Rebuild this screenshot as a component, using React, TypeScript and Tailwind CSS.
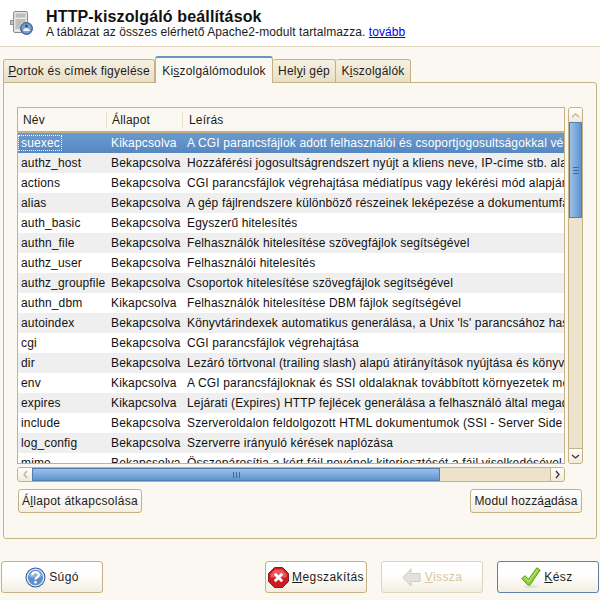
import React from 'react';

const rows = [
  ['suexec', 'Kikapcsolva', 'A CGI parancsfájlok adott felhasználói és csoportjogosultságokkal végrehajtása'],
  ['authz_host', 'Bekapcsolva', 'Hozzáférési jogosultságrendszert nyújt a kliens neve, IP-címe stb. alapján'],
  ['actions', 'Bekapcsolva', 'CGI parancsfájlok végrehajtása médiatípus vagy lekérési mód alapján'],
  ['alias', 'Bekapcsolva', 'A gép fájlrendszere különböző részeinek leképezése a dokumentumfába'],
  ['auth_basic', 'Bekapcsolva', 'Egyszerű hitelesítés'],
  ['authn_file', 'Bekapcsolva', 'Felhasználók hitelesítése szövegfájlok segítségével'],
  ['authz_user', 'Bekapcsolva', 'Felhasználói hitelesítés'],
  ['authz_groupfile', 'Bekapcsolva', 'Csoportok hitelesítése szövegfájlok segítségével'],
  ['authn_dbm', 'Kikapcsolva', 'Felhasználók hitelesítése DBM fájlok segítségével'],
  ['autoindex', 'Bekapcsolva', "Könyvtárindexek automatikus generálása, a Unix 'ls' parancsához hasonlóan"],
  ['cgi', 'Bekapcsolva', 'CGI parancsfájlok végrehajtása'],
  ['dir', 'Bekapcsolva', 'Lezáró törtvonal (trailing slash) alapú átirányítások nyújtása és könyvtárak'],
  ['env', 'Kikapcsolva', 'A CGI parancsfájloknak és SSI oldalaknak továbbított környezetek módosítása'],
  ['expires', 'Kikapcsolva', 'Lejárati (Expires) HTTP fejlécek generálása a felhasználó által megadott'],
  ['include', 'Bekapcsolva', 'Szerveroldalon feldolgozott HTML dokumentumok (SSI - Server Side Includes)'],
  ['log_config', 'Bekapcsolva', 'Szerverre irányuló kérések naplózása'],
  ['mime', 'Bekapcsolva', 'Összepárosítja a kért fájl nevének kiterjesztését a fájl viselkedésével'],
];

function ServerIcon() {
  return (
    <svg width="24" height="24" viewBox="0 0 24 24">
      <rect x="3.500" y="0.500" width="14" height="21" rx="1.500" fill="#e6e6e2" stroke="#8c8c8c" />
      <rect x="5.500" y="2.500" width="10" height="4" fill="#bdbdb8" />
      <path d="M5.500 9h10M5.500 11h10M5.500 13h6M5.500 15h5M5.500 17h5" stroke="#9a9a96" />
      <rect x="0.500" y="9.500" width="3" height="4" fill="#c4c4c0" stroke="#909090" />
      <circle cx="16.500" cy="17.500" r="6" fill="#5f86bb" stroke="#3f5f8f" />
      <circle cx="16.500" cy="17.500" r="4.500" fill="#7fa3d0" />
      <path d="M13 20c1-4 6-4 7 0z" fill="#eef2f8" />
      <circle cx="16.500" cy="15" r="1.500" fill="#2f4f80" />
    </svg>
  );
}

function HelpIcon() {
  return (
    <svg width="21" height="21" viewBox="0 0 21 21">
      <circle cx="10.500" cy="10.500" r="10" fill="#2f5f9f" />
      <circle cx="10.500" cy="10.500" r="8.300" fill="#5f8ec8" stroke="#e4edf7" strokeWidth="1.300" />
      <path d="M3.500 9a7.500 7 0 0 1 14 0c-4 2-10 2-14 0z" fill="#8fb3dc" />
      <path d="M7.300 8.200c0-4 6.500-4 6.500-.2 0 2.400-3.300 2.400-3.300 4.600" fill="none" stroke="#fff" strokeWidth="2.200" />
      <rect x="9.300" y="14" width="2.400" height="2.400" fill="#fff" />
    </svg>
  );
}

function StopIcon() {
  return (
    <svg width="21" height="21" viewBox="0 0 21 21">
      <path d="M6.500.5h8l6 6v8l-6 6h-8l-6-6v-8z" fill="#cc1c22" stroke="#94161a" />
      <path d="M7 2.500h7l4.500 4.500v3.500h-16V7z" fill="#e65a5c" />
      <path d="M6.800 6.800l7.400 7.400M14.200 6.800l-7.400 7.400" stroke="#fff" strokeWidth="2.800" />
    </svg>
  );
}

function BackIcon() {
  return (
    <svg width="19" height="19" viewBox="0 0 19 19">
      <path d="M9 .8L.8 9.500 9 18v-4.500h9v-8H9z" fill="#e2e1da" stroke="#cfcec6" />
    </svg>
  );
}

function CheckIcon() {
  return (
    <svg width="20" height="21" viewBox="0 0 20 21">
      <ellipse cx="10" cy="19.500" rx="7" ry="1.500" fill="#e4e0d4" />
      <path d="M.8 11.500l3.200-2.800 3.600 3.500L15.800.8 19.200 3 9 18H6.800z" fill="#8ed03a" stroke="#5f9a22" />
      <path d="M3 11.500l1-.8 3.800 3.800 8.500-11.700" fill="none" stroke="#c4ec8a" />
    </svg>
  );
}

function Chevron({ d }: { d: string }) {
  return (
    <svg width="9" height="9" viewBox="0 0 9 9">
      <path d={d} fill="none" stroke="currentColor" strokeWidth="1.300" />
    </svg>
  );
}

function SmallButton({ children, className }: { children: React.ReactNode; className: string }) {
  return (
    <div className={`flex h-[24px] items-center justify-center whitespace-nowrap rounded-[3px] border border-[#c4b185] bg-gradient-to-b from-white to-[#f3eee1] text-[12px] text-[#1c1c1c] ${className}`}>
      {children}
    </div>
  );
}

function BigButton({ children, className }: { children: React.ReactNode; className: string }) {
  return (
    <div className={`flex h-[32px] w-[102px] items-center justify-center gap-[3px] rounded-[3px] border bg-gradient-to-b from-white from-40% to-[#f3eee1] text-[12px] tracking-[0.4px] ${className}`}>
      {children}
    </div>
  );
}

export default function App() {
  return (
    <div className="flex h-[600px] w-[600px] flex-col overflow-hidden bg-[#fbf8f1] font-['Liberation_Sans',Arial,sans-serif] text-[#1c1c1c]">
      <div className="flex h-[47px] items-start border-b border-[#e2d8c0] bg-white pl-[10px] pt-[8px]">
        <div className="pt-[3px]"><ServerIcon /></div>
        <div className="ml-[12px] flex flex-col">
          <div className="text-[16px] font-bold leading-[17px] tracking-[0.15px] text-[#111]">HTTP-kiszolgáló beállítások</div>
          <div className="text-[12px] leading-[15px] tracking-[0.08px] text-[#1c1c1c]">
            A táblázat az összes elérhető Apache2-modult tartalmazza. <span className="text-[#0000ee] underline">tovább</span>
          </div>
        </div>
      </div>

      <div className="flex h-[35px] items-end pl-[3px]">
        <div className="flex h-[23px] w-[152px] items-center justify-center rounded-t-[3px] border border-b-0 border-[#c4b185] bg-gradient-to-b from-[#f7f1e2] to-[#e9dfc6] text-[12px] tracking-[0.2px]">
          <span><u>P</u>ortok és címek figyelése</span>
        </div>
        <div className="relative z-10 mb-[-1px] flex h-[27px] w-[118px] items-center justify-center rounded-t-[3px] border border-b-0 border-[#c4b185] border-t-[2px] border-t-[#6a94c4] bg-[#fbf8f1] text-[12px] tracking-[0.2px]">
          <span>Ki<u>s</u>zolgálómodulok</span>
        </div>
        <div className="flex h-[23px] w-[63px] items-center justify-center rounded-t-[3px] border border-b-0 border-l-0 border-[#c4b185] bg-gradient-to-b from-[#f7f1e2] to-[#e9dfc6] text-[12px] tracking-[0.2px]">
          <span>Hel<u>y</u>i gép</span>
        </div>
        <div className="flex h-[23px] w-[75px] items-center justify-center rounded-t-[3px] border border-b-0 border-l-0 border-[#c4b185] bg-gradient-to-b from-[#f7f1e2] to-[#e9dfc6] text-[12px] tracking-[0.2px]">
          <span>K<u>i</u>szolgálók</span>
        </div>
      </div>

      <div className="mx-[3px] flex h-[457px] flex-col rounded-b-[3px] rounded-tr-[3px] border border-[#c4b185] px-[13px] pt-[24px]">
        <div className="flex h-[357px] gap-[3px]">
          <div className="h-full w-[548px] overflow-hidden border border-[#c4b185] bg-white">
            <div className="flex h-[25px] items-center border-b-[2px] border-[#c4b185] bg-[#fbf8f1] text-[12px] tracking-[0.2px]">
              <div className="w-[89px] border-r border-[#e8dfc8] pl-[5px] leading-[16px]">Név</div>
              <div className="w-[76px] border-r border-[#e8dfc8] pl-[5px] leading-[16px]">Állapot</div>
              <div className="pl-[6px] leading-[16px]">Leírás</div>
            </div>
            {rows.map((r, i) => (
              <div
                key={r[0]}
                className={`flex h-[20px] items-center whitespace-nowrap text-[12px] leading-[20px] tracking-[0.15px] ${i === 0 ? 'bg-gradient-to-b from-[#6a9ad0] to-[#5688bf] text-white' : i % 2 === 1 ? 'bg-[#efefef] text-[#111]' : 'bg-white text-[#111]'}`}
              >
                <div className="ml-[1px] w-[92px] shrink-0">
                  <span className={i === 0 ? 'ml-[-1px] border border-dotted border-white pl-[2px] pr-[1px]' : 'pl-[2px]'}>{r[0]}</span>
                </div>
                <div className="w-[76px] shrink-0">{r[1]}</div>
                <div>{r[2]}</div>
              </div>
            ))}
          </div>
          <div className="flex h-full w-[15px] flex-col overflow-hidden rounded-[3px] border border-[#c4b185] bg-[#ede3cb]">
            <div className="flex h-[14px] items-center justify-center bg-gradient-to-b from-white to-[#f0ead9] text-[#c4b185]">
              <Chevron d="M1 6l3.500-3 3.500 3" />
            </div>
            <div className="flex h-[96px] items-center justify-center border border-[#4f7fb4] bg-gradient-to-r from-[#9dc0e6] to-[#5f94d0]">
              <div className="h-[7px] w-[6px] border-y border-[#3f6a9c] bg-[linear-gradient(#3f6a9c,#3f6a9c)] bg-[length:100%_1px] bg-center bg-no-repeat" />
            </div>
            <div className="flex-1" />
            <div className="flex h-[15px] items-center justify-center border-t border-[#c4b185] bg-gradient-to-b from-white to-[#f0ead9] text-[#333]">
              <Chevron d="M1 3l3.500 3 3.500-3" />
            </div>
          </div>
        </div>

        <div className="mt-[3px] flex h-[15px] w-[548px] overflow-hidden rounded-[3px] border border-[#c4b185] bg-[#ede3cb]">
          <div className="flex w-[14px] items-center justify-center bg-gradient-to-b from-white to-[#f0ead9] text-[#c4b185]">
            <Chevron d="M6 1L3 4.500 6 8" />
          </div>
          <div className="flex w-[408px] items-center justify-center border border-[#4f7fb4] bg-gradient-to-b from-[#9dc0e6] to-[#5f94d0]">
            <div className="h-[6px] w-[7px] border-x border-[#3f6a9c] bg-[linear-gradient(#3f6a9c,#3f6a9c)] bg-[length:1px_100%] bg-center bg-no-repeat" />
          </div>
          <div className="flex-1" />
          <div className="flex w-[14px] items-center justify-center border-l border-[#c4b185] bg-gradient-to-b from-white to-[#f0ead9] text-[#333]">
            <Chevron d="M3 1l3 3.500L3 8" />
          </div>
        </div>

        <div className="mt-[7px] flex justify-between pl-[1px] pr-[1px]">
          <div className="w-[124px]"><SmallButton className="tracking-[0.3px]"><span>Á<u>l</u>lapot átkapcsolása</span></SmallButton></div>
          <div className="w-[112px]"><SmallButton className="tracking-[0.15px]"><span>Modul hozzá<u>a</u>dása</span></SmallButton></div>
        </div>
      </div>

      <div className="flex flex-1 items-start pl-[1px] pt-[22px]">
        <BigButton className="border-[#c4b185]"><HelpIcon /><span>Súgó</span></BigButton>
        <div className="ml-[162px] flex gap-[14px]">
          <BigButton className="border-[#c4b185]"><StopIcon /><span><u>M</u>egszakítás</span></BigButton>
          <BigButton className="border-[#e0d5ba] text-[#d8c69c]"><BackIcon /><span className="ml-[1px]"><u>V</u>issza</span></BigButton>
          <BigButton className="border-[#5f7fa8]"><span className="ml-[-2px]"><CheckIcon /></span><span><u>K</u>ész</span></BigButton>
        </div>
      </div>
    </div>
  );
}
